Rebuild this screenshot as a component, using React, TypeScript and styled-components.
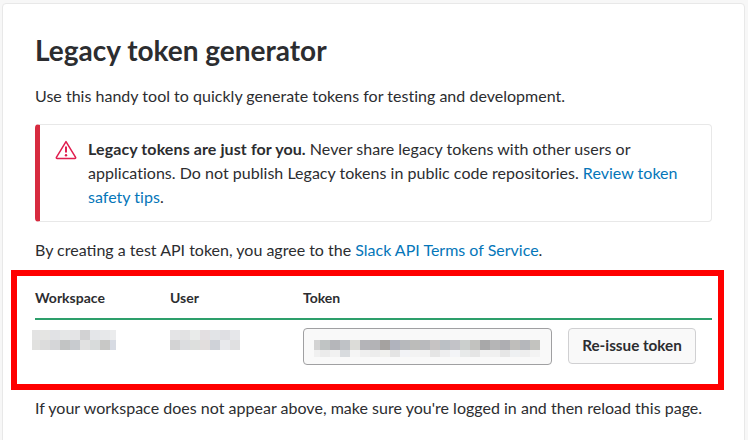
import React from "react";
import styled, { createGlobalStyle } from "styled-components";

// blurred values, one list of greys per row
const workspaceBlur = [
  ["#e3e3e3", "#e5e5e3", "#e1e2e5", "#e5e7e7", "#e4e4e6", "#d2d2d3", "#e4e6e9", "#e7e8ea", "#ebeced"],
  ["#e1e1df", "#dcdcdc", "#d5d6d8", "#c2c4c4", "#c8cbcf", "#e1e1e1", "#d8dbdb", "#c8c8c6", "#d7dbe3"],
];
const userBlur = [
  ["#e4e4e6", "#e2e2e3", "#e9ebea", "#e3dfe1", "#e2e4e7", "#dfdfe3", "#e6e7ea"],
  ["#d3d3d4", "#dcdde0", "#dddfdd", "#e2dedd", "#cfd2d8", "#e8e9ec", "#e0e0e1"],
];
const tokenBlur = [
  ["#d3d3d3", "#c0c4c4", "#b5b6ba", "#bfc2c6", "#dcdcd8", "#b4b4b8", "#b3b3b6", "#a5a2a0", "#b0b3bd", "#b7b9bc", "#bcbcba", "#b9babd", "#c6c3c3", "#bbc0c5", "#c3c3c8", "#cbcfcd", "#c2c2bf", "#a8a8a9", "#b5b5b6", "#aeaeb2", "#bfbebb", "#b5b7bb", "#c3c3bf"],
  ["#f0f0f0", "#ebebeb", "#f1f1f1", "#d8dbde", "#f5f5f5", "#efefef", "#ececec", "#f0f0ee", "#e4e4e4", "#f2f3f6", "#f3f3f3", "#f2f2f2", "#e5e5e5", "#eeeeef", "#f3f4f7", "#e8eaea", "#e5e5e5", "#f1f1f1", "#f0f0f0", "#e6e6e6", "#eef0f2", "#eeeeee", "#f3f3f3"],
];

const Blur = ({ rows, first, last, rowHeights }: { rows: string[][]; first: number; last: number; rowHeights: number[] }) => (
  <BlurWrap>
    {rows.map((row, r) => (
      <BlurRow key={r} $height={rowHeights[r]}>
        {row.map((tone, i) => (
          <BlurCell
            key={i}
            style={{
              background: tone,
              width: i === 0 ? first : i === row.length - 1 ? last : 10,
            }}
          />
        ))}
      </BlurRow>
    ))}
  </BlurWrap>
);

const WarningIcon = () => (
  <svg width="22" height="20" viewBox="0 0 22 20" fill="none">
    <path
      d="M11 1.6 20.6 17.4a.8.8 0 0 1-.7 1.2H2.1a.8.8 0 0 1-.7-1.2L11 1.6Z"
      stroke="#e01e4f"
      strokeWidth="1.5"
      strokeLinejoin="round"
    />
    <path d="M11 6.6v6" stroke="#e01e4f" strokeWidth="2" />
    <circle cx="11" cy="15.2" r="1.2" fill="#e01e4f" />
  </svg>
);

const App = () => {
  return (
    <Page>
      <GlobalStyle />
      <Card>
        <Title>Legacy token generator</Title>
        <Intro>Use this handy tool to quickly generate tokens for testing and development.</Intro>

        <Alert>
          <AlertIcon>
            <WarningIcon />
          </AlertIcon>
          <AlertText>
            <strong>Legacy tokens are just for you.</strong> Never share legacy tokens with other users or
            applications. Do not publish Legacy tokens in public code repositories.{" "}
            <Link href="#">Review token safety tips</Link>.
          </AlertText>
        </Alert>

        <Terms>
          By creating a test API token, you agree to the <Link href="#">Slack API Terms of Service</Link>.
        </Terms>

        <Highlight>
          <TableHead>
            <HeadCell>Workspace</HeadCell>
            <HeadCell>User</HeadCell>
            <HeadCell>Token</HeadCell>
          </TableHead>
          <TableRow>
            <NameCell $shift={-3}>
              <Blur rows={workspaceBlur} first={8} last={6} rowHeights={[10, 10]} />
            </NameCell>
            <NameCell $shift={0}>
              <Blur rows={userBlur} first={10} last={10} rowHeights={[10, 10]} />
            </NameCell>
            <TokenCell>
              <TokenField>
                <Blur rows={tokenBlur} first={6} last={10} rowHeights={[10, 7]} />
              </TokenField>
              <ReissueButton>Re-issue token</ReissueButton>
            </TokenCell>
          </TableRow>
        </Highlight>

        <Footnote>If your workspace does not appear above, make sure you're logged in and then reload this page.</Footnote>
      </Card>
    </Page>
  );
};

export default App;

const GlobalStyle = createGlobalStyle`
  html, body {
    margin: 0;
    padding: 0;
    height: 440px;
    overflow: hidden;
    background: #f7f7f7;
  }
`;

const Page = styled.div`
  box-sizing: border-box;
  height: 440px;
  padding: 3px 3px 0 2px;
  overflow: hidden;
  font-family: Lato, "Liberation Sans", sans-serif;
  font-size: 16px;
  line-height: 24px;
  letter-spacing: 0.025px;
  color: #2c2d30;
`;

const Card = styled.div`
  box-sizing: border-box;
  min-height: 520px;
  padding: 30px 32px 0;
  background: #fff;
  border: 1px solid #e8e8e8;
  border-radius: 4px;
`;

const Title = styled.h1`
  margin: 0;
  font-size: 28px;
  line-height: 32px;
  font-weight: 700;
  letter-spacing: 0;
`;

const Intro = styled.p`
  margin: 18px 0 0;
  letter-spacing: 0.015px;
`;

const Alert = styled.div`
  display: flex;
  box-sizing: border-box;
  height: 98px;
  margin-top: 16px;
  padding: 12px 24px 12px 15px;
  border: 1px solid #e8e8e8;
  border-left: 5px solid #d72b3f;
  border-radius: 4px;
`;

const AlertIcon = styled.div`
  flex: none;
  width: 33px;
  padding-top: 3px;
`;

const AlertText = styled.div`
  flex: 1;
  strong {
    font-weight: 700;
    letter-spacing: 0.1px;
  }
`;

const Link = styled.a`
  color: #0576b9;
  text-decoration: none;
`;

const Terms = styled.p`
  margin: 16px 0 0;
  letter-spacing: 0;
`;

const Highlight = styled.section`
  box-sizing: border-box;
  height: 120px;
  margin: 8px -12px 0 -24px;
  padding: 10px 6px 0 18px;
  border: 6px solid #ff0000;
`;

const TableHead = styled.div`
  display: grid;
  grid-template-columns: 135px 133px 1fr;
  height: 32px;
  border-bottom: 2px solid #2d9f6b;
`;

const HeadCell = styled.div`
  font-size: 14px;
  font-weight: 700;
  line-height: 24px;
  letter-spacing: 0;
`;

const TableRow = styled.div`
  display: grid;
  grid-template-columns: 135px 133px 1fr;
  padding-top: 8px;
`;

const NameCell = styled.div<{ $shift: number }>`
  margin-left: ${({ $shift }) => $shift}px;
  padding-top: 2px;
`;

const TokenCell = styled.div`
  display: flex;
  align-items: flex-start;
  gap: 16px;
`;

const TokenField = styled.div`
  box-sizing: border-box;
  width: 249px;
  height: 37px;
  padding: 11px 0 0 10px;
  background: #f9f9f9;
  border: 1px solid #a0a0a2;
  border-radius: 4px;
`;

const ReissueButton = styled.button`
  box-sizing: border-box;
  width: 128px;
  height: 36px;
  padding: 0 0 2px;
  font-family: inherit;
  font-size: 15.25px;
  font-weight: 700;
  color: #2c2d30;
  background: #f9f9f9;
  border: 1px solid #d0d0d2;
  border-radius: 4px;
`;

const BlurWrap = styled.div`
  display: flex;
  flex-direction: column;
`;

const BlurRow = styled.div<{ $height: number }>`
  display: flex;
  height: ${({ $height }) => $height}px;
`;

const BlurCell = styled.div`
  flex: none;
  height: 100%;
`;

const Footnote = styled.p`
  margin: 6px 0 0;
  letter-spacing: 0.018px;
`;
